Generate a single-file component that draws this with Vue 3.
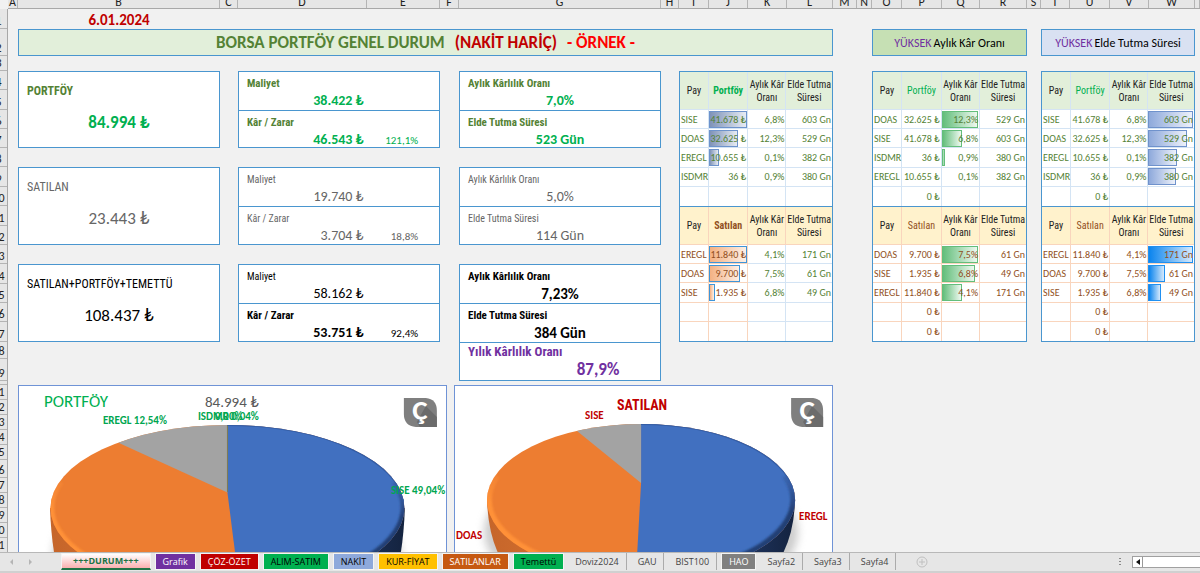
<script setup>
const columns = ['A','B','C','D','E','F','G','H','I','J','K','L','M','N','O','P','Q','R','S','T','U','V','W','']
const rows = Array.from({ length: 31 }, (_, i) => i + 1)

const totals = [
  { key: 't1', label: 'PORTFÖY', value: '84.994 ₺', tone: 'green' },
  { key: 't2', label: 'SATILAN', value: '23.443 ₺', tone: 'grey' },
  { key: 't3', label: 'SATILAN+PORTFÖY+TEMETTÜ', value: '108.437 ₺', tone: 'black' }
]
const costs = [
  { key: 'c1', tone: 'green', cost: '38.422 ₺', profit: '46.543 ₺', pct: '121,1%' },
  { key: 'c2', tone: 'grey', cost: '19.740 ₺', profit: '3.704 ₺', pct: '18,8%' },
  { key: 'c3', tone: 'black', cost: '58.162 ₺', profit: '53.751 ₺', pct: '92,4%' }
]
const rates = [
  { key: 'r1', tone: 'green', rate: '7,0%', hold: '523 Gün' },
  { key: 'r2', tone: 'grey', rate: '5,0%', hold: '114 Gün' },
  { key: 'r3', tone: 'black', rate: '7,23%', hold: '384 Gün', year: '87,9%' }
]

const tables = [
  {
    key: 'a1', kind: 'held', strong: true, name: 'Portföy', barCol: 1, bar: 'steel',
    rows: [
      ['SISE', '41.678 ₺', '6,8%', '603 Gn', 98],
      ['DOAS', '32.625 ₺', '12,3%', '529 Gn', 76],
      ['EREGL', '10.655 ₺', '0,1%', '382 Gn', 26],
      ['ISDMR', '36 ₺', '0,9%', '380 Gn', 0],
      ['', '', '', '', 0]
    ]
  },
  {
    key: 'a2', kind: 'sold', mixed: true, strong: true, name: 'Satılan', barCol: 1, bar: 'peach',
    rows: [
      ['EREGL', '11.840 ₺', '4,1%', '171 Gn', 98],
      ['DOAS', '9.700 ₺', '7,5%', '61 Gn', 80],
      ['SISE', '1.935 ₺', '6,8%', '49 Gn', 17],
      ['', '', '', '', 0],
      ['', '', '', '', 0]
    ]
  },
  {
    key: 'b1', kind: 'held', name: 'Portföy', barCol: 2, bar: 'leaf',
    rows: [
      ['DOAS', '32.625 ₺', '12,3%', '529 Gn', 98],
      ['SISE', '41.678 ₺', '6,8%', '603 Gn', 54],
      ['ISDMR', '36 ₺', '0,9%', '380 Gn', 8],
      ['EREGL', '10.655 ₺', '0,1%', '382 Gn', 0],
      ['', '0 ₺', '', '', 0]
    ]
  },
  {
    key: 'b2', kind: 'sold', name: 'Satılan', barCol: 2, bar: 'leaf',
    rows: [
      ['DOAS', '9.700 ₺', '7,5%', '61 Gn', 98],
      ['SISE', '1.935 ₺', '6,8%', '49 Gn', 88],
      ['EREGL', '11.840 ₺', '4,1%', '171 Gn', 54],
      ['', '0 ₺', '', '', 0],
      ['', '0 ₺', '', '', 0]
    ]
  },
  {
    key: 'd1', kind: 'held', name: 'Portföy', barCol: 3, bar: 'indigo',
    rows: [
      ['SISE', '41.678 ₺', '6,8%', '603 Gn', 98],
      ['DOAS', '32.625 ₺', '12,3%', '529 Gn', 85],
      ['EREGL', '10.655 ₺', '0,1%', '382 Gn', 63],
      ['ISDMR', '36 ₺', '0,9%', '380 Gn', 61],
      ['', '0 ₺', '', '', 0]
    ]
  },
  {
    key: 'd2', kind: 'sold', name: 'Satılan', barCol: 3, bar: 'azure',
    rows: [
      ['EREGL', '11.840 ₺', '4,1%', '171 Gn', 98],
      ['DOAS', '9.700 ₺', '7,5%', '61 Gn', 36],
      ['SISE', '1.935 ₺', '6,8%', '49 Gn', 28],
      ['', '0 ₺', '', '', 0],
      ['', '0 ₺', '', '', 0]
    ]
  }
]

const tabs = [
  { name: '+++DURUM+++', tone: 'active' },
  { name: 'Grafik', tone: 'purple' },
  { name: 'ÇÖZ-ÖZET', tone: 'ruby' },
  { name: 'ALIM-SATIM', tone: 'emerald' },
  { name: 'NAKİT', tone: 'blue' },
  { name: 'KUR-FİYAT', tone: 'gold' },
  { name: 'SATILANLAR', tone: 'rust' },
  { name: 'Temettü', tone: 'emerald' },
  { name: 'Doviz2024', tone: 'plain' },
  { name: 'GAU', tone: 'plain' },
  { name: 'BIST100', tone: 'plain' },
  { name: 'HAO', tone: 'dim' },
  { name: 'Sayfa2', tone: 'plain' },
  { name: 'Sayfa3', tone: 'plain' },
  { name: 'Sayfa4', tone: 'plain' }
]
</script>

<template>
  <div class="book">
    <div class="col-heads tracks">
      <span v-for="c in columns" :key="c">{{ c }}</span>
    </div>
    <div class="middle">
      <div class="row-heads lines">
        <span v-for="r in rows" :key="r">{{ r === 20 ? '' : r }}</span>
      </div>
      <main class="sheet tracks lines">
        <p class="date">6.01.2024</p>
        <h1 class="banner main-banner">
          <span>BORSA PORTFÖY GENEL DURUM</span>
          <span class="crimson">(NAKİT HARİÇ)</span>
          <span class="red">- ÖRNEK -</span>
        </h1>
        <h2 class="banner rate-banner"><span class="violet">YÜKSEK</span><span>Aylık Kâr Oranı</span></h2>
        <h2 class="banner hold-banner"><span class="violet">YÜKSEK</span><span>Elde Tutma Süresi</span></h2>

        <section v-for="t in totals" :key="t.key" class="card total" :class="[t.key, t.tone]">
          <h3>{{ t.label }}</h3>
          <p>{{ t.value }}</p>
        </section>

        <section v-for="c in costs" :key="c.key" class="card cost" :class="[c.key, c.tone]">
          <div class="half">
            <h4>Maliyet</h4>
            <p><b>{{ c.cost }}</b></p>
          </div>
          <div class="half">
            <h4 class="second">Kâr / Zarar</h4>
            <p><b class="second">{{ c.profit }}</b><small>{{ c.pct }}</small></p>
          </div>
        </section>

        <section v-for="r in rates" :key="r.key" class="card rate" :class="[r.key, r.tone]">
          <div class="half">
            <h4>Aylık Kârlılık Oranı</h4>
            <p>{{ r.rate }}</p>
          </div>
          <div class="half">
            <h4>Elde Tutma Süresi</h4>
            <p>{{ r.hold }}</p>
          </div>
          <div v-if="r.year" class="half year">
            <h4>Yılık Kârlılık Oranı</h4>
            <p>{{ r.year }}</p>
          </div>
        </section>

        <table v-for="t in tables" :key="t.key" :class="[t.key, t.kind, { strong: t.strong, mixed: t.mixed }]">
          <colgroup>
            <col class="w-pay"><col class="w-sum"><col class="w-rate"><col class="w-hold">
          </colgroup>
          <thead>
            <tr>
              <th scope="col">Pay</th>
              <th scope="col" class="name">{{ t.name }}</th>
              <th scope="col">Aylık Kâr Oranı</th>
              <th scope="col">Elde Tutma Süresi</th>
            </tr>
          </thead>
          <tbody>
            <tr v-for="(row, i) in t.rows" :key="i">
              <td v-for="n in 4" :key="n">
                <div class="cell">
                  <i v-if="n - 1 === t.barCol && row[4]" class="bar" :class="t.bar" :style="{ width: row[4] + '%' }"></i>
                  <span>{{ row[n - 1] }}</span>
                </div>
              </td>
            </tr>
          </tbody>
        </table>

        <div class="charts">
          <figure class="chart first">
            <svg viewBox="0 0 427 260" role="img" aria-label="PORTFÖY">
              <defs>
                <linearGradient id="wallO" x1="0" x2="1"><stop offset="0" stop-color="#c5652a" /><stop offset="0.3" stop-color="#cf6c2d" /><stop offset="1" stop-color="#a85420" /></linearGradient>
                <linearGradient id="wallB" x1="0" x2="1"><stop offset="0" stop-color="#2b4b86" /><stop offset="0.75" stop-color="#1c3057" /><stop offset="1" stop-color="#14233f" /></linearGradient>
                <linearGradient id="rimO" x1="0" x2="0" y1="0" y2="1"><stop offset="0" stop-color="#ff9138" stop-opacity=".3" /><stop offset=".3" stop-color="#ff9138" /></linearGradient>
                <linearGradient id="rimB" x1="0" x2="0" y1="0" y2="1"><stop offset="0" stop-color="#2b4c8b" stop-opacity=".3" /><stop offset=".4" stop-color="#233f75" /></linearGradient>
                <filter id="soft" x="-10%" y="-10%" width="120%" height="120%"><feGaussianBlur stdDeviation="4" /></filter>
                <filter id="edge" x="-20%" y="-20%" width="140%" height="140%"><feGaussianBlur stdDeviation="1" /></filter>
                <clipPath id="faceA"><ellipse cx="208.500" cy="122" rx="177" ry="83" /></clipPath>
              </defs>
              <ellipse cx="208" cy="168" rx="174" ry="83" fill="#9a9a9a" opacity=".5" filter="url(#soft)" />
              <path d="M31 122Q32 150 36 172Q70 240 208 250V122Z" fill="url(#wallO)" />
              <path d="M386 122Q385 150 381 172Q340 240 208 250V122Z" fill="url(#wallB)" />
              <g clip-path="url(#faceA)">
                <rect width="427" height="260" fill="#ed7d31" />
                <path d="M208.500 106.500V0H427V260H228Z" fill="#4170c0" />
                <path d="M208.500 106.500L100 57L60 0H208.500Z" fill="#a3a3a3" />
                <path d="M208.500 38V106" stroke="#7d7a52" stroke-width="1" />
                <path d="M41 95A177 83 0 0 0 100 187.600" fill="none" stroke="url(#rimO)" stroke-width="8" filter="url(#edge)" />
                <path d="M376 95A177 83 0 0 1 317 187.600" fill="none" stroke="url(#rimB)" stroke-width="8" filter="url(#edge)" />
                <path d="M208.500 39A177 83 0 0 1 385 116" fill="none" stroke="#335da5" stroke-width="2" />
              </g>
              <text class="ct" x="25" y="21">PORTFÖY</text>
              <text class="ct grey-t" x="213" y="21" text-anchor="middle">84.994 ₺</text>
              <text class="cl" x="84" y="38">EREGL 12,54%</text>
              <text class="cl" x="179" y="34">ISDMR 0,04%</text>
              <text class="cl" x="196" y="34">0,00%</text>
              <text class="cl" x="372" y="108">SISE 49,04%</text>
              <path d="M385 12H407Q418 13 418 25V41H397Q385 40 385 28Z" fill="#7f7f7f" />
              <path d="M407 20L418 31V41H401L398 36Z" fill="#6b6b6b" />
              <text class="logo" x="401" y="34" text-anchor="middle">Ç</text>
            </svg>
          </figure>
          <figure class="chart second-chart">
            <svg viewBox="0 0 377 260" role="img" aria-label="SATILAN">
              <defs><clipPath id="faceB"><ellipse cx="186" cy="114" rx="154" ry="76" /></clipPath></defs>
              <ellipse cx="186" cy="146" rx="157" ry="76" fill="#9a9a9a" opacity=".5" filter="url(#soft)" />
              <path d="M32 114Q33 145 43 167Q75 230 184 240V114Z" fill="url(#wallO)" />
              <path d="M340 114Q339 145 328 167Q290 230 184 240V114Z" fill="url(#wallB)" />
              <g clip-path="url(#faceB)">
                <rect width="377" height="260" fill="#ed7d31" />
                <path d="M186 97V0H377V260H177Z" fill="#4170c0" />
                <path d="M186 97L122 45L95 0H186Z" fill="#a3a3a3" />
                <path d="M41 89A154 76 0 0 0 110 180" fill="none" stroke="url(#rimO)" stroke-width="9" filter="url(#edge)" />
                <path d="M331 89A154 76 0 0 1 262 180" fill="none" stroke="url(#rimB)" stroke-width="9" filter="url(#edge)" />
                <path d="M186 38A154 76 0 0 1 339 106" fill="none" stroke="#335da5" stroke-width="2" />
              </g>
              <text class="head" x="187" y="24" text-anchor="middle">SATILAN</text>
              <text class="cl sold-l" x="130" y="33">SISE</text>
              <text class="cl sold-l" x="344" y="134">EREGL</text>
              <text class="cl sold-l" x="1" y="153">DOAS</text>
              <path d="M336 12H358Q368 13 368 25V41H347Q336 40 336 28Z" fill="#7f7f7f" />
              <path d="M357 20L368 31V41H351L348 36Z" fill="#6b6b6b" />
              <text class="logo" x="352" y="34" text-anchor="middle">Ç</text>
            </svg>
          </figure>
        </div>
      </main>
    </div>
    <footer class="tabbar">
      <div class="arrows">
        <button type="button" aria-label="Önceki sayfa"><svg width="5" height="6" viewBox="0 0 5 6"><path d="M4 0V6L1 3Z" fill="#b5b5b5" /></svg></button>
        <button type="button" aria-label="Sonraki sayfa"><svg width="5" height="6" viewBox="0 0 5 6"><path d="M1 0V6L4 3Z" fill="#b5b5b5" /></svg></button>
      </div>
      <nav class="tabs">
        <button v-for="t in tabs" :key="t.name" type="button" :class="t.tone">{{ t.name }}</button>
      </nav>
      <button class="add" type="button" aria-label="Yeni sayfa">
        <svg width="12" height="12" viewBox="0 0 12 12" fill="none" stroke="#c0c0c0"><circle cx="6" cy="6" r="5" /><path d="M6 3V9M3 6H9" /></svg>
      </button>
      <span class="dots"><i></i><i></i><i></i></span>
      <div class="scroller">
        <button type="button" aria-label="Sola kaydır"><svg width="4" height="6" viewBox="0 0 4 6"><path d="M4 0V6L0 3Z" fill="#111" /></svg></button>
      </div>
    </footer>
  </div>
</template>

<style>
body { margin: 0; }
</style>

<style scoped>
.book {
  --line: #4a96cf;
  --body: Calibri, Carlito, Lato, "Noto Sans", sans-serif;
  --narrow: "Bahnschrift SemiCondensed", "Roboto Condensed", "Liberation Sans Narrow", "Open Sans Condensed", Roboto, sans-serif;
  height: 100vh;
  display: flex;
  flex-direction: column;
  overflow: hidden;
  background: #f1f1f1;
  font-family: var(--body);
  color: #000;
}
.book *, .book { box-sizing: border-box; }
h1, h2, h3, h4, p, figure { margin: 0; font-weight: 400; }
button { border: 0; padding: 0; background: none; font: inherit; color: inherit; }

.tracks {
  display: grid;
  grid-template-columns:
    minmax(0, 10fr) minmax(0, 202fr) minmax(0, 18fr) minmax(0, 129fr) minmax(0, 73fr) minmax(0, 19fr)
    minmax(0, 202fr) minmax(0, 18fr) minmax(0, 30fr) minmax(0, 39fr) minmax(0, 39fr) minmax(0, 46fr)
    minmax(0, 24fr) minmax(0, 15fr) minmax(0, 30fr) minmax(0, 40fr) minmax(0, 38fr) minmax(0, 47fr)
    minmax(0, 14fr) minmax(0, 29fr) minmax(0, 40fr) minmax(0, 39fr) minmax(0, 46fr) minmax(0, 5fr);
}
.lines {
  display: grid;
  grid-template-rows: 20px 27px 15px 19px 20px 19px 19px 19px 20px 19px 20px 19px 19px 20px 19px 19px 20px 17px 22px 4px
    15px 15px 15px 15px 15px 18px 15px 15px 15px 15px 15px;
}
.col-heads {
  flex: none;
  height: 16px;
  margin: -7px 0 0 8px;
  background: #e6e6e6;
  border-bottom: 1px solid #a8a8a8;
  font: 12px/18px var(--body);
  text-align: center;
  color: #222;
}
.col-heads span { height: 15px; border-right: 1px solid #b4b4b4; }
.middle { flex: 1; min-height: 0; display: flex; overflow: hidden; }
.row-heads {
  flex: none;
  width: 18px;
  margin-left: -10px;
  background: #e6e6e6;
  border-right: 1px solid #a8a8a8;
  font: 12px/13px var(--body);
  text-align: center;
  color: #222;
}
.row-heads span { border-bottom: 1px solid #b4b4b4; display: flex; align-items: flex-end; justify-content: center; }
.sheet { flex: 1; min-width: 0; }

.date { grid-area: 1 / 2 / 2 / 3; text-align: center; font-size: 15px; line-height: 22px; font-weight: 700; color: #c00000; }
.banner {
  border: 1px solid var(--line);
  display: flex;
  align-items: center;
  justify-content: center;
  white-space: pre;
}
.main-banner { grid-area: 2 / 2 / 3 / 13; gap: 10px; background: #e2efda; font-size: 17px; font-weight: 700; color: #548235; }
.rate-banner { grid-area: 2 / 15 / 3 / 19; gap: 2px; background: #c6e0b4; font-size: 12px; }
.hold-banner { grid-area: 2 / 20 / 3 / 24; gap: 2px; background: #d9e1f2; font-size: 12px; }
.crimson { color: #c00000; }
.red { color: #f00; }
.violet { color: #7030a0; }

.card { background: #fff; border: 1px solid var(--line); }
.t1 { grid-area: 4 / 2 / 8 / 3; }
.t2 { grid-area: 9 / 2 / 13 / 3; }
.t3 { grid-area: 14 / 2 / 18 / 3; }
.c1 { grid-area: 4 / 4 / 8 / 6; }
.c2 { grid-area: 9 / 4 / 13 / 6; }
.c3 { grid-area: 14 / 4 / 18 / 6; }
.r1 { grid-area: 4 / 7 / 8 / 8; }
.r2 { grid-area: 9 / 7 / 13 / 8; }
.r3 { grid-area: 14 / 7 / 20 / 8; }
.total { padding: 10px 8px 0; }
.total h3 { font: 12px/18px var(--narrow); }
.total p { font-size: 17px; line-height: 20px; margin-top: 13px; text-align: center; }
.green h3, .green h4 { color: #548235; font-weight: 700; }
.green p { color: #00b050; font-weight: 700; }
.grey { color: #666; }
.cost, .rate { display: grid; grid-auto-rows: minmax(0, 1fr); }
.half { padding: 4px 8px 0; }
.half + .half { border-top: 1px solid var(--line); }
.half h4 { font: 10px/16px var(--narrow); }
.green .half h4 { font-size: 11px; font-weight: 700; }
.half p { font-size: 14px; line-height: 17px; }
.cost p { display: grid; grid-template-columns: 118fr 55fr 13fr; align-items: baseline; text-align: right; }
.cost b { font-weight: inherit; }
.half small { font-size: 11px; font-weight: 400; }
.black .half .second { font-weight: 700; }
.black .half h4.second { font-size: 11px; }
.rate p { text-align: center; }
.rate.black h4, .rate.black p { font-weight: 700; }
.rate.black h4 { font-size: 11px; }
.rate.black p { font-size: 15px; line-height: 19px; }
.rate .year { color: #7030a0; padding-top: 0; }
.rate.black .year h4 { font-size: 13px; line-height: 17px; }
.rate.black .year p { font-size: 17px; line-height: 20px; padding-left: 76px; }

table {
  width: 100%;
  height: 100%;
  table-layout: fixed;
  border-collapse: separate;
  border-spacing: 0;
  background: #fff;
  border: 1px solid var(--line);
  font-size: 10px;
  --rule: #d4e4f4;
}
.a1 { grid-area: 4 / 9 / 11 / 13; }
.a2 { grid-area: 11 / 9 / 18 / 13; }
.b1 { grid-area: 4 / 15 / 11 / 19; }
.b2 { grid-area: 11 / 15 / 18 / 19; }
.d1 { grid-area: 4 / 20 / 11 / 24; }
.d2 { grid-area: 11 / 20 / 18 / 24; }
.held { color: #548235; border-bottom: 0; }
.sold { color: #914f22; --rule: #f9d5bd; }
.w-pay { width: 19%; }
.w-sum { width: 26%; }
.w-rate { width: 25%; }
.w-hold { width: 30%; }
th, td { padding: 0; border-right: 1px solid var(--rule); border-bottom: 1px solid var(--rule); }
th:last-child, td:last-child { border-right: 0; }
tbody tr:last-child td { border-bottom: 0; }
th { height: 38px; font: 10px/13px var(--narrow); color: #222; background: #e2efda; }
.sold th { background: #fff2cc; }
th.name { color: #00b050; }
.sold th.name { color: #914f22; }
.strong th.name { font-weight: 700; }
.mixed td:nth-child(n + 3) { color: #548235; border-color: #d4e4f4; }
td { height: 19px; text-align: right; white-space: nowrap; }
td:first-child { text-align: left; }
.cell { position: relative; padding: 0 1px; line-height: 17px; min-height: 17px; }
.cell span { position: relative; }
.bar { position: absolute; left: 0; top: 0; bottom: 0; border: 1px solid; }
.steel { background: linear-gradient(90deg, #7f93b8, #e6ebf3); border-color: #6d93cc; }
.peach { background: linear-gradient(90deg, #f4b183, #fdf0e7); border-color: #3f95d8; }
.leaf { background: linear-gradient(90deg, #63be7b, #eef8f0); border-color: #63be7b; }
.indigo { background: linear-gradient(90deg, #8ea9db, #edf1fa); border-color: #6f92cc; }
.azure { background: linear-gradient(90deg, #0a84ee, #d5e9fc); border-color: #2090f0; }

.charts { grid-area: 21 / 2 / 32 / 13; display: flex; gap: 7px; }
.chart { background: #fff; border: 1px solid #6f93d6; min-width: 0; height: 262px; }
.first { flex: 429 1 0; }
.second-chart { flex: 379 1 0; }
.chart svg { display: block; width: 100%; }
text { font-family: var(--body); }
.ct { font-size: 17px; fill: #00b050; }
.ct.grey-t { fill: #595959; font-size: 15px; }
.cl { font-size: 11px; font-weight: 700; fill: #00a650; }
.cl.sold-l { fill: #c00000; }
.head { font: 700 14px var(--narrow); fill: #c00000; }
.logo { font-size: 29px; font-weight: 700; fill: #fff; }

.tabbar {
  flex: none;
  height: 21px;
  display: flex;
  align-items: flex-start;
  background: #e6e6e6;
  border-top: 1px solid #b8b8b8;
  border-bottom: 2px solid #d0d0d0;
  font: 9px/14px "Segoe UI", "Open Sans", "Noto Sans", sans-serif;
}
.arrows { width: 61px; height: 17px; display: flex; align-items: center; gap: 14px; padding-left: 9px; }
.tabs { display: flex; gap: 4px; }
.tabs button { height: 17px; padding: 0 7px; white-space: nowrap; border: 1px solid #f4f4f4; }
.tabs .active { padding: 0 11px; background: linear-gradient(#fff, #fbb0b0); color: #217346; font-weight: 700; border-bottom: 2px solid #217346; }
.purple { background: #7030a0; color: #fff; }
.ruby { background: #c00000; color: #fff; }
.emerald { background: #00b050; }
.blue { background: #8ea9db; }
.gold { background: #ffc000; }
.rust { background: #c65911; color: #fff; }
.dim { background: #808080; color: #fff; }
.tabs .plain { border: 0; border-right: 1px solid #ababab; color: #444; }
.add { margin-left: 20px; height: 17px; display: flex; align-items: center; }
.dots { margin-left: auto; width: 2px; height: 17px; display: flex; flex-direction: column; justify-content: center; gap: 2px; }
.dots i { height: 1px; background: #888; }
.scroller { width: 68px; height: 12px; margin: 3px 0 0 11px; background: #fff; border: 1px solid #a0a0a0; border-right: 0; }
.scroller button { width: 10px; height: 10px; display: flex; align-items: center; justify-content: center; border-right: 1px solid #999; }
</style>
